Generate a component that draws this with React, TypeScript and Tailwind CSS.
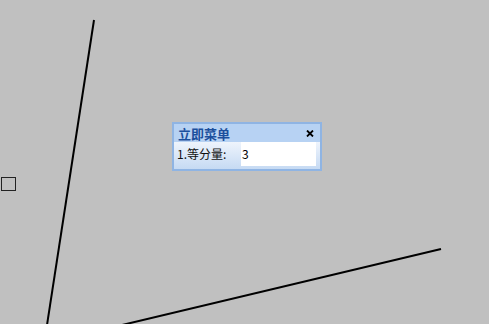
import React from "react";

export default function App() {
  return (
    <div className="w-[489px] h-[336px] bg-white overflow-hidden" style={{ fontFamily: '"Noto Sans CJK SC", "Noto Sans", sans-serif' }}>
      <div className="relative w-[489px] h-[324px] bg-[#c0c0c0]">
        <svg className="absolute inset-0" width="489" height="324" viewBox="0 0 489 324">
          <line x1="94" y1="20" x2="47" y2="325" stroke="#000" strokeWidth="2" />
          <line x1="441" y1="249" x2="122" y2="325" stroke="#000" strokeWidth="2" />
          <rect x="1.5" y="177.5" width="14" height="13" fill="none" stroke="#222" strokeWidth="1" />
        </svg>
        <div className="absolute left-[172px] top-[122px] w-[150px] h-[49px] border-2 border-[#8fb4e3] flex flex-col">
          <div className="h-[18px] bg-[#b7d2f3] flex items-center justify-between pl-[4px] pr-[6px]">
            <span className="text-[13px] leading-none font-bold text-[#1c4f9d]">立即菜单</span>
            <svg width="8" height="7" viewBox="0 0 8 7">
              <path d="M1 0.5 L7 6.5 M7 0.5 L1 6.5" stroke="#000" strokeWidth="1.8" />
            </svg>
          </div>
          <div className="flex-1 flex items-start bg-gradient-to-b from-[#eef4fc] to-[#c6daf3]">
            <div className="w-[67px] h-[24px] flex items-center pl-[3px] text-[12px] leading-none text-[#111]">1.等分量:</div>
            <div className="w-[75px] h-[24px] bg-white flex items-center pl-[1px] text-[12px] leading-none text-black">3</div>
          </div>
        </div>
      </div>
    </div>
  );
}
